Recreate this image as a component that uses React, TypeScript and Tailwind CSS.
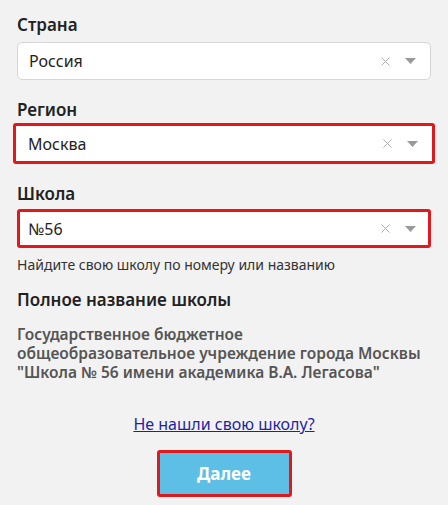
import { X } from "lucide-react";

const FONT = { fontFamily: '"Noto Sans", "Open Sans", sans-serif' };

function Caret() {
  return (
    <svg width="11" height="6" viewBox="0 0 11 6" className="ml-[12px]">
      <path d="M0 0 L11 0 L5.5 6 Z" fill="#9a9a9a" />
    </svg>
  );
}

function Controls({ pr }: { pr: string }) {
  return (
    <div className={`flex items-center ${pr}`}>
      <X className="w-[15px] h-[15px] text-[#a8a8a8]" strokeWidth={1.5} />
      <Caret />
    </div>
  );
}

function Label({ children }: { children: React.ReactNode }) {
  return <p className="text-[17px] leading-[22px] font-semibold text-[#222]">{children}</p>;
}

export default function App() {
  return (
    <div className="w-[448px] h-[505px] bg-[#f2f2f2] overflow-hidden" style={FONT}>
      <div className="px-[17px] pt-[14px]">
        <Label>Страна</Label>
        <div className="mt-[6px] h-[38px] bg-white border border-[#d6d6d6] rounded-[5px] flex items-center justify-between">
          <span className="pl-[11px] text-[16px] text-[#222]">Россия</span>
          <Controls pr="pr-[14px]" />
        </div>

        <div className="mt-[19px]"><Label>Регион</Label></div>
        <div className="mt-[2px] -mx-[4px] h-[41px] bg-white border-[3px] border-[#e0191c] rounded-[3px] flex items-center justify-between">
          <span className="pl-[12px] text-[16px] text-[#222]">Москва</span>
          <Controls pr="pr-[14px]" />
        </div>

        <div className="mt-[19px]"><Label>Школа</Label></div>
        <div className="mt-[4px] h-[39px] bg-white border-[3px] border-[#e0191c] rounded-[3px] flex items-center justify-between">
          <span className="pl-[8px] text-[16px] text-[#222]">№56</span>
          <Controls pr="pr-[12px]" />
        </div>
        <p className="mt-[8px] text-[14px] leading-[18px] text-[#333]">Найдите свою школу по номеру или названию</p>

        <p className="mt-[15px] text-[17px] leading-[22px] font-semibold text-[#222]">Полное название школы</p>
        <p className="mt-[14px] text-[15.5px] leading-[19px] font-semibold text-[#555]">
          Государственное бюджетное
          <br />
          общеобразовательное учреждение города Москвы
          <br />
          "Школа № 56 имени академика В.А. Легасова"
        </p>

        <div className="mt-[31px] flex justify-center">
          <a href="#" className="text-[16px] leading-[22px] text-[#1f1fa8] underline">Не нашли свою школу?</a>
        </div>

        <div className="mt-[15px] flex justify-center">
          <button className="w-[135px] h-[47px] bg-[#5dbfe6] border-[3px] border-[#e0191c] rounded-[3px] text-white text-[17px] font-bold">
            Далее
          </button>
        </div>
      </div>
    </div>
  );
}
